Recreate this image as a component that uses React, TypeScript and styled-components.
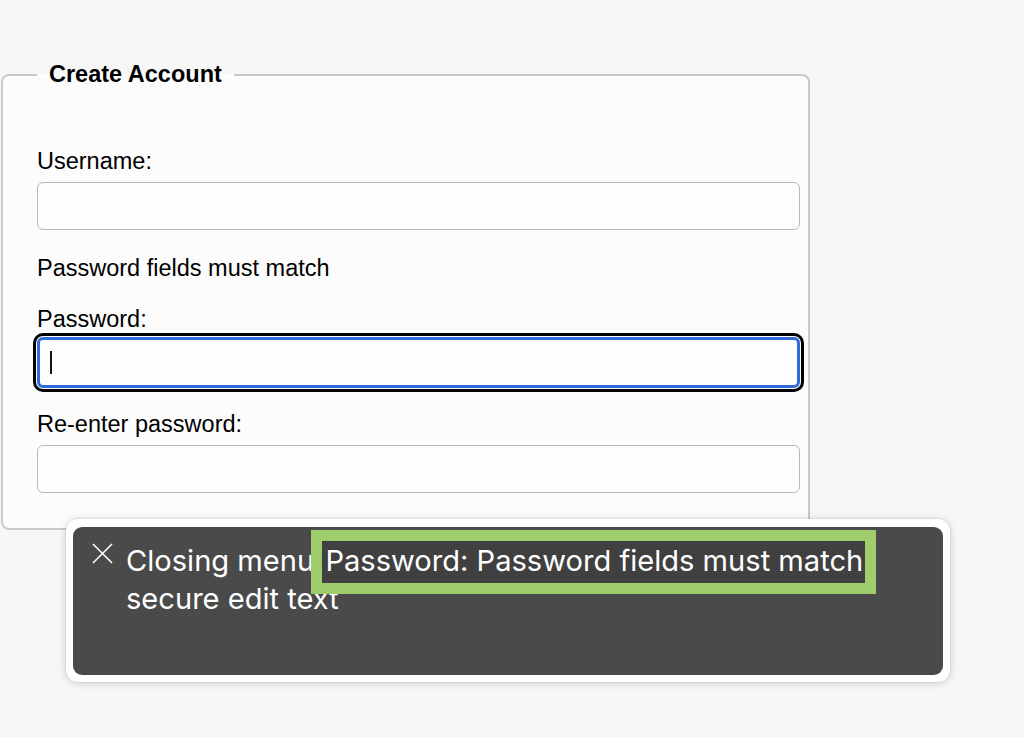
import React from "react";
import styled, { createGlobalStyle } from "styled-components";

const Global = createGlobalStyle`
  html, body {
    margin: 0;
    padding: 0;
    background: #f7f7f7;
  }
  body {
    font-family: "Liberation Sans", Arial, Helvetica, sans-serif;
    color: #000;
  }
  * { box-sizing: border-box; }
`;

const Page = styled.div`
  position: relative;
  width: 1024px;
  height: 737px;
  overflow: hidden;
  padding: 61px 0 0 1px;
`;

const Fieldset = styled.fieldset`
  width: 809px;
  margin: 0;
  padding: 60px 8px 35px 34px;
  border: 2px solid #c9c9c9;
  border-radius: 8px;
  background: #fcfcfc;
  min-width: 0;
`;

const Legend = styled.legend`
  margin-left: 0;
  padding: 0 12px;
  font-size: 23.5px;
  line-height: 27px;
  font-weight: 700;
`;

const Group = styled.div<{ $tight?: boolean }>`
  display: flex;
  flex-direction: column;
  margin-bottom: ${(p) => (p.$tight ? "23px" : "25px")};
  &:last-child { margin-bottom: 0; }
`;

const Label = styled.label`
  font-size: 23.5px;
  line-height: 27px;
  margin-bottom: 7px;
`;

const Hint = styled.div`
  font-size: 23.5px;
  line-height: 27px;
  margin-bottom: 24px;
`;

const Input = styled.div<{ $focused?: boolean }>`
  position: relative;
  width: 763px;
  height: ${(p) => (p.$focused ? "51px" : "48px")};
  margin-top: ${(p) => (p.$focused ? "-3px" : "0")};
  border-radius: 6px;
  background: #fdfdfd;
  border: ${(p) => (p.$focused ? "3px solid #2f6bd6" : "1.5px solid #b8b8b8")};
  box-shadow: ${(p) =>
    p.$focused ? "0 0 0 1px #ffffff, 0 0 0 4px #000000" : "none"};
  display: flex;
  align-items: center;
  padding-left: 10px;
`;

const Caret = styled.span`
  display: block;
  width: 1.5px;
  height: 23px;
  background: #111;
`;

const Caption = styled.div`
  position: absolute;
  left: 66px;
  top: 519px;
  width: 884px;
  height: 163px;
  padding: 8px 7px 7px 7px;
  background: #ffffff;
  border-radius: 12px;
  box-shadow: 0 1px 8px rgba(0, 0, 0, 0.18), 0 0 0 1px rgba(0, 0, 0, 0.04);
`;

const CaptionInner = styled.div`
  height: 100%;
  background: #4a4a4a;
  border-radius: 9px;
  display: flex;
  align-items: flex-start;
  gap: 13px;
  padding: 15px 16px 0 19px;
`;

const CloseIcon = styled.svg`
  flex: none;
  width: 21px;
  height: 21px;
  margin-top: 1px;
`;

const CaptionText = styled.div`
  flex: 1;
  font-family: Inter, "Noto Sans", sans-serif;
  font-size: 29.1px;
  line-height: 38px;
  color: #ffffff;
`;

const Highlight = styled.span`
  background: #404040;
  padding: 2px 2px 5px 3px;
  outline: 11px solid #9fcd6b;
`;

export default function App() {
  return (
    <>
      <Global />
      <Page>
        <Fieldset>
          <Legend>Create Account</Legend>
          <Group>
            <Label>Username:</Label>
            <Input />
          </Group>
          <Group $tight>
            <Hint>Password fields must match</Hint>
            <Label>Password:</Label>
            <Input $focused>
              <Caret />
            </Input>
          </Group>
          <Group>
            <Label>Re-enter password:</Label>
            <Input />
          </Group>
        </Fieldset>
        <Caption>
          <CaptionInner>
            <CloseIcon viewBox="0 0 21 21">
              <path
                d="M1 1 L20 20 M20 1 L1 20"
                stroke="#ffffff"
                strokeWidth="1.6"
                fill="none"
              />
            </CloseIcon>
            <CaptionText>
              Closing menu <Highlight>Password: Password fields must match</Highlight>{" "}
              secure edit text
            </CaptionText>
          </CaptionInner>
        </Caption>
      </Page>
    </>
  );
}
